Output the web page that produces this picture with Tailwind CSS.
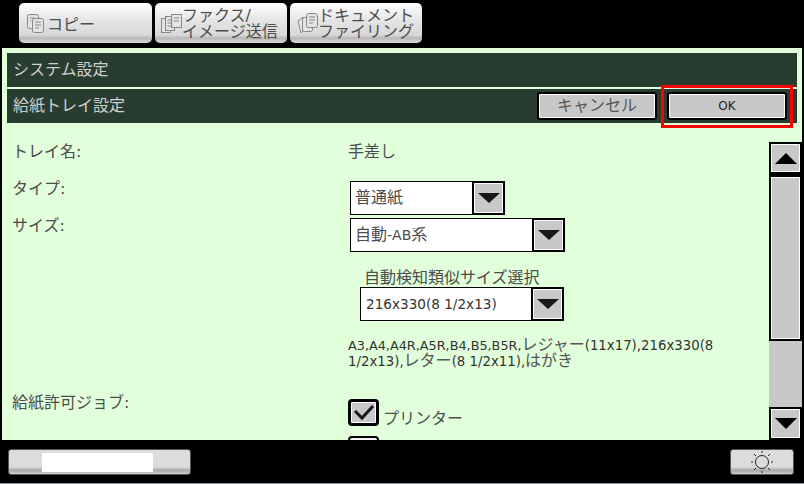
<!DOCTYPE html>
<html lang="ja">
<head>
<meta charset="UTF-8">
<title>給紙トレイ設定</title>
<script src="https://cdn.jsdelivr.net/npm/@tailwindcss/browser@4"></script>
</head>
<body class="w-[804px] h-[484px] overflow-hidden bg-black font-['DejaVu_Sans','Noto_Sans_CJK_JP',sans-serif] text-[#4c4c4c]">
  <!-- tabs -->
  <div class="h-[48px] pl-[19px] pt-[3px] flex gap-[3px]">
    <div class="w-[133px] h-[40px] rounded-[5px] bg-[linear-gradient(#fff_0%,#e4e4e4_45%,#d8d8d8_80%,#b8b8b8_88%,#d8d8d8_100%)] flex items-center pl-[8px] gap-[3px]">
      <svg class="w-[17px] h-[19px]" viewBox="0 0 17 19" fill="#e4e4e4" stroke="#888" stroke-width="1"><rect x="0.5" y="0.5" width="11" height="14" rx="2"/><rect x="5.5" y="4.5" width="11" height="14" rx="2"/><path d="M8 8h6M8 11h6M8 14h4M3 4h4M3 7h1"/></svg>
      <span class="text-[16px] leading-none pt-[3px]">コピー</span>
    </div>
    <div class="w-[132px] h-[40px] rounded-[5px] bg-[linear-gradient(#fff_0%,#e4e4e4_45%,#d8d8d8_80%,#b8b8b8_88%,#d8d8d8_100%)] flex items-center pl-[6px]">
      <svg class="w-[21px] h-[19px]" viewBox="0 0 21 19" fill="#e4e4e4" stroke="#888" stroke-width="1"><rect x="0.5" y="4.5" width="9" height="14"/><rect x="4.5" y="2.5" width="9" height="14"/><rect x="10.5" y="0.5" width="10" height="13"/><path d="M6.5 6h5M6.5 9h5M6.5 12h5M13 4h5M13 7h5"/></svg>
      <span class="text-[16px] leading-[16px] pt-[2px]">ファクス/<br>イメージ送信</span>
    </div>
    <div class="w-[132px] h-[40px] rounded-[5px] bg-[linear-gradient(#fff_0%,#e4e4e4_45%,#d8d8d8_80%,#b8b8b8_88%,#d8d8d8_100%)] flex items-center pl-[7px]">
      <svg class="w-[21px] h-[21px]" viewBox="0 0 21 21" fill="#e4e4e4" stroke="#888" stroke-width="1"><path d="M1 8l5-4v14l-2 2z"/><rect x="5.5" y="4.5" width="10" height="14" rx="2"/><rect x="9.5" y="0.5" width="11" height="14" rx="2"/><path d="M12 4h6M12 7h6M12 10h4"/></svg>
      <span class="text-[16px] leading-[16px] pt-[2px]">ドキュメント<br>ファイリング</span>
    </div>
  </div>

  <!-- panel -->
  <div class="relative ml-[2px] w-[800px] h-[392px] bg-[#e2ffdc] overflow-hidden">
    <div class="pt-[5px] px-[5px] flex flex-col gap-[2px]">
      <div class="w-[790px] h-[34px] bg-[#283c2f] text-[#cfcfcf] text-[16px] flex items-center pl-[6px]">システム設定</div>
      <div class="w-[790px] h-[34px] bg-[#283c2f] text-[#cfcfcf] text-[16px] flex items-center pl-[6px] pr-[10px]">
        <span class="flex-1">給紙トレイ設定</span>
        <div class="w-[120px] h-[28px] rounded-[3px] border-2 border-black shadow-[inset_0_0_0_1px_#fff] bg-[#c8c8c8] text-[#555] text-[16px] flex items-center justify-center">キャンセル</div>
        <div class="ml-[10px] w-[120px] h-[28px] rounded-[3px] border-2 border-black shadow-[inset_0_0_0_1px_#fff] bg-[#c8c8c8] text-[#222] text-[12px] flex items-center justify-center">OK</div>
      </div>
    </div>
    <!-- red focus frame over the OK button -->
    <div class="absolute left-[659px] top-[37px] w-[132px] h-[43px] border-[3px] border-[#ff0000]"></div>

    <!-- form -->
    <div class="relative text-[16px] leading-[24px] h-[317px]">
      <div class="absolute left-[10px] top-[17px]">トレイ名:</div>
      <div class="absolute left-[346px] top-[17px]">手差し</div>
      <div class="absolute left-[10px] top-[54px]">タイプ:</div>
      <div class="absolute left-[10px] top-[91px]">サイズ:</div>
      <div class="absolute left-[348px] top-[58px] w-[155px] h-[34px] flex border border-black bg-white">
        <span class="flex-1 pl-[4px] leading-[32px]">普通紙</span>
        <div class="w-[33px] -m-px border-[2px] border-black shadow-[inset_0_0_0_1px_#fff] bg-[#c8c8c8] flex items-center justify-center"><div class="w-0 h-0 border-x-[11px] border-x-transparent border-t-[10px] border-t-[#181818]"></div></div>
      </div>
      <div class="absolute left-[348px] top-[95px] w-[215px] h-[34px] flex border border-black bg-white">
        <span class="flex-1 pl-[4px] leading-[32px]">自動<span class="text-[14px]">-AB</span>系</span>
        <div class="w-[33px] -m-px border-[2px] border-black shadow-[inset_0_0_0_1px_#fff] bg-[#c8c8c8] flex items-center justify-center"><div class="w-0 h-0 border-x-[11px] border-x-transparent border-t-[10px] border-t-[#181818]"></div></div>
      </div>
      <div class="absolute left-[362px] top-[143px]">自動検知類似サイズ選択</div>
      <div class="absolute left-[358px] top-[164px] w-[204px] h-[34px] flex border border-black bg-white">
        <span class="flex-1 pl-[5px] leading-[32px] text-[13.6px] text-[#333]">216x330(8 1/2x13)</span>
        <div class="w-[33px] -m-px border-[2px] border-black shadow-[inset_0_0_0_1px_#fff] bg-[#c8c8c8] flex items-center justify-center"><div class="w-0 h-0 border-x-[11px] border-x-transparent border-t-[10px] border-t-[#181818]"></div></div>
      </div>
      <div class="absolute left-[346px] top-[214px] w-[400px] text-[13.3px] text-[#333]">
        <div class="h-[16px] leading-[16px] whitespace-nowrap"><span class="text-[12.8px]">A3,A4,A4R,A5R,B4,B5,B5R,</span><span class="text-[16px] text-[#555]">レジャー</span>(11x17),216x330(8</div>
        <div class="h-[16px] leading-[16px] whitespace-nowrap">1/2x13),<span class="text-[16px] text-[#555]">レター</span>(8 1/2x11),<span class="text-[16px] text-[#555]">はがき</span></div>
      </div>
      <div class="absolute left-[10px] top-[268px]">給紙許可ジョブ:</div>
      <div class="absolute left-[346px] top-[276px] w-[31px] h-[27px] rounded-[4px] border-[3px] border-black shadow-[inset_0_0_0_1px_#fff] bg-[#c8c8c8]">
        <svg class="w-full h-full" viewBox="0 0 25 21" fill="none" stroke="#181818" stroke-width="3"><path d="M4 9l7 7L22 4"/></svg>
      </div>
      <div class="absolute left-[381px] top-[284px]">プリンター</div>
      <div class="absolute left-[346px] top-[313px] w-[31px] h-[27px] rounded-[4px] border-[2px] border-black bg-[#f4f4f4]"></div>
    </div>

    <!-- scrollbar -->
    <div class="absolute left-[767px] top-[94px] w-[33px] h-[298px] bg-black flex flex-col items-start pt-[2px]">
      <div class="ml-[2px] w-[29px] h-[28px] bg-[#c8c8c8] border border-white flex items-center justify-center"><div class="w-0 h-0 border-x-[11px] border-x-transparent border-b-[11px] border-b-black"></div></div>
      <div class="ml-[2px] mt-[5px] w-[29px] h-[162px] bg-[#c8c8c8] border border-white"></div>
      <div class="mt-[2px] w-[33px] h-[66px] bg-[#c8c8c8]"></div>
      <div class="ml-[2px] mt-[2px] w-[29px] h-[29px] bg-[#c8c8c8] border border-white flex items-center justify-center"><div class="w-0 h-0 border-x-[11px] border-x-transparent border-t-[11px] border-t-black"></div></div>
    </div>
  </div>

  <!-- bottom bar -->
  <div class="h-[43px] flex items-start justify-between pt-[9px] pl-[8px] pr-[10px]">
    <div class="w-[183px] h-[26px] rounded-[3px] border border-[#555] bg-[linear-gradient(#dcdcdc_0%,#dcdcdc_70%,#a8a8a8_85%,#cfcfcf_100%)] pl-[33px] pt-[3px]">
      <div class="w-[111px] h-[19px] bg-white"></div>
    </div>
    <div class="w-[64px] h-[26px] rounded-[3px] border border-[#555] bg-[linear-gradient(#dcdcdc_0%,#dcdcdc_70%,#a8a8a8_85%,#cfcfcf_100%)] flex items-center justify-center">
      <svg class="w-[22px] h-[22px]" viewBox="0 0 22 22" fill="none" stroke="#222" stroke-width="1"><circle cx="11" cy="11" r="6.5"/><path d="M11 0v2M11 20v2M0 11h2M20 11h2M3 3l2 2M17 17l2 2M3 19l2-2M17 5l2-2"/></svg>
    </div>
  </div>
  <div class="h-px bg-[#8a94a0]"></div>
</body>
</html>
